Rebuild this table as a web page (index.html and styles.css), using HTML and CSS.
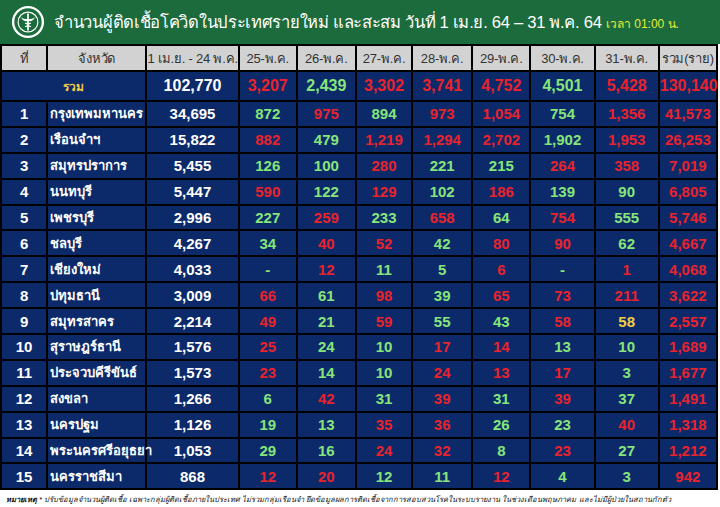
FILE: index.html
```html
<!DOCTYPE html>
<html lang="th">
<head>
<meta charset="utf-8">
<link rel="stylesheet" href="styles.css">
</head>
<body>
<header class="banner">
  <svg class="logo" viewBox="0 0 36 36" width="34" height="34">
    <circle cx="18" cy="18" r="17" fill="#fff"/>
    <circle cx="18" cy="18" r="14.5" fill="#1b6b3c"/>
    <circle cx="18" cy="18" r="10.5" fill="none" stroke="#fff" stroke-width="1.2"/>
    <path d="M18 9 V27" stroke="#fff" stroke-width="1.8"/>
    <path d="M10.5 13 Q13 18 18 17 Q23 18 25.5 13 Q23 15.5 18 14.5 Q13 15.5 10.5 13 Z" fill="#fff"/>
    <path d="M15 19 Q18 21 21 19 M15 23 Q18 21 21 23" stroke="#fff" stroke-width="1.3" fill="none"/>
  </svg>
  <h1 class="title">จำนวนผู้ติดเชื้อโควิดในประเทศรายใหม่ และสะสม วันที่ 1 เม.ย. 64 – 31 พ.ค. 64 <span class="time">เวลา 01:00 น.</span></h1>
</header>
<table class="grid">
  <colgroup>
    <col class="c-no"><col class="c-prov"><col class="c-base">
    <col class="c-d1"><col class="c-d2"><col class="c-d3"><col class="c-d4">
    <col class="c-d5"><col class="c-d6"><col class="c-d7"><col class="c-sum">
  </colgroup>
  <thead>
    <tr class="head">
      <th>ที่</th><th>จังหวัด</th><th>1 เม.ย. - 24 พ.ค.</th><th>25-พ.ค.</th><th>26-พ.ค.</th><th>27-พ.ค.</th><th>28-พ.ค.</th><th>29-พ.ค.</th><th>30-พ.ค.</th><th>31-พ.ค.</th><th>รวม(ราย)</th>
    </tr>
  </thead>
  <tbody>
    <tr class="total">
      <td colspan="2" class="y label">รวม</td><td class="w">102,770</td><td class="r">3,207</td><td class="g">2,439</td><td class="r">3,302</td><td class="r">3,741</td><td class="r">4,752</td><td class="g">4,501</td><td class="r">5,428</td><td class="r">130,140</td>
    </tr>
    <tr><td class="w">1</td><td class="prov">กรุงเทพมหานคร</td><td class="w">34,695</td><td class="g">872</td><td class="r">975</td><td class="g">894</td><td class="r">973</td><td class="r">1,054</td><td class="g">754</td><td class="r">1,356</td><td class="r">41,573</td></tr>
    <tr><td class="w">2</td><td class="prov">เรือนจำฯ</td><td class="w">15,822</td><td class="r">882</td><td class="g">479</td><td class="r">1,219</td><td class="r">1,294</td><td class="r">2,702</td><td class="g">1,902</td><td class="r">1,953</td><td class="r">26,253</td></tr>
    <tr><td class="w">3</td><td class="prov">สมุทรปราการ</td><td class="w">5,455</td><td class="g">126</td><td class="g">100</td><td class="r">280</td><td class="g">221</td><td class="g">215</td><td class="r">264</td><td class="r">358</td><td class="r">7,019</td></tr>
    <tr><td class="w">4</td><td class="prov">นนทบุรี</td><td class="w">5,447</td><td class="r">590</td><td class="g">122</td><td class="r">129</td><td class="g">102</td><td class="r">186</td><td class="g">139</td><td class="g">90</td><td class="r">6,805</td></tr>
    <tr><td class="w">5</td><td class="prov">เพชรบุรี</td><td class="w">2,996</td><td class="g">227</td><td class="r">259</td><td class="g">233</td><td class="r">658</td><td class="g">64</td><td class="r">754</td><td class="g">555</td><td class="r">5,746</td></tr>
    <tr><td class="w">6</td><td class="prov">ชลบุรี</td><td class="w">4,267</td><td class="g">34</td><td class="r">40</td><td class="r">52</td><td class="g">42</td><td class="r">80</td><td class="r">90</td><td class="g">62</td><td class="r">4,667</td></tr>
    <tr><td class="w">7</td><td class="prov">เชียงใหม่</td><td class="w">4,033</td><td class="g">-</td><td class="r">12</td><td class="g">11</td><td class="g">5</td><td class="r">6</td><td class="g">-</td><td class="r">1</td><td class="r">4,068</td></tr>
    <tr><td class="w">8</td><td class="prov">ปทุมธานี</td><td class="w">3,009</td><td class="r">66</td><td class="g">61</td><td class="r">98</td><td class="g">39</td><td class="r">65</td><td class="r">73</td><td class="r">211</td><td class="r">3,622</td></tr>
    <tr><td class="w">9</td><td class="prov">สมุทรสาคร</td><td class="w">2,214</td><td class="r">49</td><td class="g">21</td><td class="r">59</td><td class="g">55</td><td class="g">43</td><td class="r">58</td><td class="y">58</td><td class="r">2,557</td></tr>
    <tr><td class="w">10</td><td class="prov">สุราษฎร์ธานี</td><td class="w">1,576</td><td class="r">25</td><td class="g">24</td><td class="g">10</td><td class="r">17</td><td class="r">14</td><td class="g">13</td><td class="g">10</td><td class="r">1,689</td></tr>
    <tr><td class="w">11</td><td class="prov">ประจวบคีรีขันธ์</td><td class="w">1,573</td><td class="r">23</td><td class="g">14</td><td class="g">10</td><td class="r">24</td><td class="r">13</td><td class="r">17</td><td class="g">3</td><td class="r">1,677</td></tr>
    <tr><td class="w">12</td><td class="prov">สงขลา</td><td class="w">1,266</td><td class="g">6</td><td class="r">42</td><td class="g">31</td><td class="r">39</td><td class="g">31</td><td class="r">39</td><td class="g">37</td><td class="r">1,491</td></tr>
    <tr><td class="w">13</td><td class="prov">นครปฐม</td><td class="w">1,126</td><td class="g">19</td><td class="g">13</td><td class="r">35</td><td class="r">36</td><td class="g">26</td><td class="g">23</td><td class="r">40</td><td class="r">1,318</td></tr>
    <tr><td class="w">14</td><td class="prov">พระนครศรีอยุธยา</td><td class="w">1,053</td><td class="g">29</td><td class="g">16</td><td class="r">24</td><td class="r">32</td><td class="g">8</td><td class="r">23</td><td class="g">27</td><td class="r">1,212</td></tr>
    <tr><td class="w">15</td><td class="prov">นครราชสีมา</td><td class="w">868</td><td class="r">12</td><td class="r">20</td><td class="g">12</td><td class="g">11</td><td class="r">12</td><td class="g">4</td><td class="g">3</td><td class="r">942</td></tr>
  </tbody>
</table>
<p class="note"><b>หมายเหตุ</b> * ปรับข้อมูลจำนวนผู้ติดเชื้อ เฉพาะกลุ่มผู้ติดเชื้อภายในประเทศ ไม่รวมกลุ่มเรือนจำ ยึดข้อมูลผลการติดเชื้อจากการสอบสวนโรคในระบบรายงาน ในช่วงเดือนพฤษภาคม และไม่มีผู้ป่วยในสถานกักตัว</p>
</body>
</html>
```
FILE: styles.css
```css
html, body {
  margin: 0;
  padding: 0;
  background: #fff;
}
body {
  width: 720px;
  height: 507px;
  overflow: hidden;
  font-family: "Liberation Sans", "Noto Sans", sans-serif;
}
.banner {
  height: 44px;
  background: #1b6b3c;
  display: flex;
  align-items: center;
  padding-left: 11px;
  gap: 9px;
  box-sizing: border-box;
}
.logo {
  flex: none;
}
.title {
  margin: 0;
  font-weight: normal;
  font-size: 16.6px;
  color: #fff;
  white-space: nowrap;
  letter-spacing: -0.3px;
}
.time {
  font-size: 12px;
  letter-spacing: 0;
  color: #e4ec3c;
}
.grid {
  table-layout: fixed;
  border-collapse: separate;
  border-spacing: 2px;
  background: #000;
  width: 718px;
  margin: 0;
}
.c-no { width: 44px; }
.c-prov { width: 97px; }
.c-base { width: 90px; }
.c-d1 { width: 56px; }
.c-d2 { width: 57px; }
.c-d3 { width: 54px; }
.c-d4 { width: 58px; }
.c-d5 { width: 56px; }
.c-d6 { width: 62px; }
.c-d7 { width: 62px; }
.c-sum { width: 56px; }
.head th {
  background: #d2d2d2;
  color: #333;
  font-weight: normal;
  font-size: 13px;
  height: 24px;
  padding: 0;
  text-align: center;
  white-space: nowrap;
  letter-spacing: -0.2px;
}
.grid td {
  background: #0c2a6a;
  height: 23.9px;
  padding: 0;
  text-align: center;
  font-weight: bold;
  font-size: 15px;
  white-space: nowrap;
  font-family: "Liberation Sans", "Noto Sans", sans-serif;
}
.grid tr.total td {
  height: 28px;
  font-size: 16px;
}
.grid td.prov {
  text-align: left;
  padding-left: 2px;
  font-size: 13px;
  color: #fff;
}
.w { color: #fff; }
.r { color: #e8232d; }
.g { color: #86e57a; }
.y { color: #f2cc45; }
.grid tr.total td.label {
  font-size: 12px;
}
.note {
  margin: 3px 0 0 6px;
  font-size: 7.5px;
  font-style: italic;
  color: #111;
  white-space: nowrap;
}
```
